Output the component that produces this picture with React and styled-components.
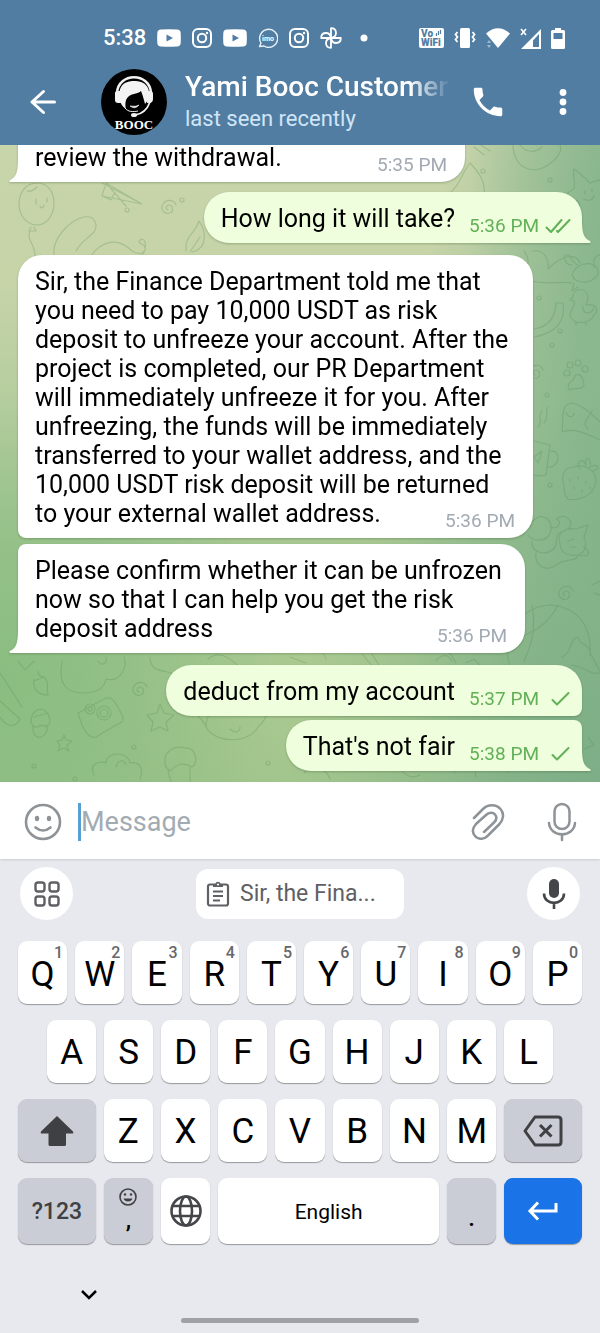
import React from "react";
import styled, { createGlobalStyle, css } from "styled-components";

const GlobalStyle = createGlobalStyle`
  *, *::before, *::after { box-sizing: border-box; }
  body { margin: 0; font-family: Roboto, "Liberation Sans", sans-serif; background: #e8e9ee; }
  button { border: 0; padding: 0; margin: 0; background: none; font: inherit; color: inherit; cursor: pointer; }
  h1, p { margin: 0; }
  svg { display: block; flex: none; }
`;

const Screen = styled.div`
  display: flex;
  flex-direction: column;
  height: 100vh;
  overflow: hidden;
`;

/* ---------- header ---------- */

const Header = styled.header`
  flex: none;
  background: #517da2;
  color: #fff;
`;

const StatusBar = styled.div`
  display: flex;
  align-items: center;
  justify-content: space-between;
  height: 60px;
  padding: 16px 35px 0 103px;
`;

const StatusGroup = styled.div`
  display: flex;
  align-items: center;
  gap: ${(p) => p.$gap}px;
`;

const Clock = styled.time`
  font-size: 22px;
  font-weight: 500;
  line-height: 24px;
`;

const AppBar = styled.div`
  display: flex;
  align-items: center;
  height: 85px;
  padding: 0 18px 2px 24px;
`;

const IconButton = styled.button`
  display: flex;
  align-items: center;
  justify-content: center;
  flex: none;
  width: 38px;
  height: 48px;
  color: ${(p) => p.$color || "inherit"};
`;

const Avatar = styled.svg`
  margin-left: 39px;
`;

const Peer = styled.div`
  flex: 1;
  min-width: 0;
  margin: 0 18px;
  padding-top: 2px;
`;

const PeerName = styled.h1`
  font-size: 28px;
  font-weight: 500;
  line-height: 32px;
  white-space: nowrap;
  overflow: hidden;
  mask-image: linear-gradient(to right, #000 calc(100% - 42px), transparent 100%);
`;

const PeerStatus = styled.p`
  font-size: 22px;
  line-height: 32px;
  color: #d0e5f8;
`;

const CallButton = styled(IconButton)`
  margin-right: 37px;
`;

/* ---------- conversation ---------- */

const Chat = styled.main`
  position: relative;
  flex: 1;
  min-height: 0;
  overflow: hidden;
  display: flex;
  flex-direction: column;
  justify-content: flex-end;
  padding: 0 18px 11px;
  background:
    radial-gradient(ellipse 52% 60% at 100% 100%, #7dae87 0%, #7dae8700 100%),
    radial-gradient(ellipse 36% 90% at 104% 55%, #84b48b 0%, #84b48b00 100%),
    radial-gradient(ellipse 26% 60% at 104% 8%, #84b38c 0%, #84b38c00 100%),
    radial-gradient(ellipse 45% 45% at 0% 84%, #8abd81 0%, #8abd8100 100%),
    radial-gradient(ellipse 50% 40% at 62% 84%, #aecb91 0%, #aecb9100 100%),
    linear-gradient(to bottom, #c8d4aa 0%, #c6d4a8 22%, #a3c693 60%, #97c089 100%);
`;

const Wallpaper = styled.svg`
  position: absolute;
  inset: 0;
  width: 100%;
  height: 100%;
  color: #4f8a50;
  opacity: 0.27;
`;

const Bubble = styled.article`
  position: relative;
  display: flex;
  width: ${(p) => (p.$width ? `${p.$width}px` : "fit-content")};
  max-width: 100%;
  flex: none;
  margin-top: ${(p) => p.$space || 0}px;
  border-radius: ${(p) => p.$corners};
  filter: drop-shadow(0 1px 1px rgba(60, 90, 50, 0.35));
  ${(p) =>
    p.$out
      ? css`
          align-self: flex-end;
          padding: 12px 11px 10px 17px;
          background: #effedd;
        `
      : css`
          align-self: flex-start;
          padding: 12px 18px 10px 17px;
          background: #fff;
        `}
`;

const MessageText = styled.p`
  flex: 1;
  font-size: 25px;
  line-height: 29px;
  color: #000;
`;

/* Floats to the end of the last line, slightly under its baseline. */
const Meta = styled.span`
  float: right;
  display: flex;
  align-items: center;
  gap: 6px;
  height: 22px;
  margin: 11px 0 -4px 14px;
  font-size: 19px;
  line-height: 22px;
  white-space: nowrap;
  color: ${(p) => (p.$out ? "#62b057" : "#a1aab3")};
`;

const TailShape = styled.svg`
  position: absolute;
  bottom: 0;
  ${(p) => (p.$out ? "right: -9px; transform: scaleX(-1);" : "left: -9px;")}
`;

const Tail = ({ out }) => (
  <TailShape $out={out} width="10" height="24" viewBox="0 0 10 24" aria-hidden="true">
    <path d="M10 0H9C9 12 8 19 1 22C0 23 0 24 2 24H10Z" fill={out ? "#effedd" : "#fff"} />
  </TailShape>
);

const Ticks = ({ double }) => (
  <svg width="26" height="18" viewBox="0 0 26 18" fill="none" stroke="currentColor" strokeWidth="2" strokeLinecap="round" strokeLinejoin="round" aria-hidden="true">
    {double ? (
      <path d="M1.500 10.500L6 15L16.500 3M12 14L13 15L24.500 3" />
    ) : (
      <path d="M7.500 10L12 14.500L23.500 3" />
    )}
  </svg>
);

const Message = ({ text, time, out, tail, read, corners, width, space }) => (
  <Bubble $out={out} $corners={corners} $width={width} $space={space}>
    {tail && <Tail out={out} />}
    <MessageText>
      {text}
      <Meta $out={out}>
        <time>{time}</time>
        {out && <Ticks double={read} />}
      </Meta>
    </MessageText>
  </Bubble>
);

const messages = [
  { text: "review the withdrawal.", time: "5:35 PM", width: 447, tail: true, corners: "0 0 24px 0" },
  { text: "How long it will take?", time: "5:36 PM", out: true, read: true, tail: true, corners: "25px 25px 0 25px", space: 10 },
  {
    text: "Sir, the Finance Department told me that you need to pay 10,000 USDT as risk deposit to unfreeze your account. After the project is completed, our PR Department will immediately unfreeze it for you. After unfreezing, the funds will be immediately transferred to your wallet address, and the 10,000 USDT risk deposit will be returned to your external wallet address.",
    time: "5:36 PM", width: 515, corners: "24px 24px 24px 8px", space: 12,
  },
  {
    text: "Please confirm whether it can be unfrozen now so that I can help you get the risk deposit address",
    time: "5:36 PM", width: 507, tail: true, corners: "8px 24px 24px 0", space: 6,
  },
  { text: "deduct from my account", time: "5:37 PM", out: true, corners: "25px 25px 8px 25px", space: 12 },
  { text: "That's not fair", time: "5:38 PM", out: true, tail: true, corners: "25px 8px 0 25px", space: 4 },
];

const Swirl = ({ x, y }) => (
  <path transform={`translate(${x} ${y})`} d="M0 2C-3 1-2-3 1-3C5-3 6 3 2 5C-4 7-8 1-5-4C-2-9 6-9 8-3" />
);

const Doodles = () => (
  <Wallpaper viewBox="0 0 600 637" preserveAspectRatio="xMidYMax slice" fill="none" stroke="currentColor" strokeWidth="1.200" strokeLinecap="round" strokeLinejoin="round" aria-hidden="true">
    {/* balloon, plane, pickle and leaf */}
    <path d="M37 38C24 38 19 50 19 59C19 72 28 80 37 80C46 80 54 71 54 58C54 47 48 38 37 38ZM31 82L29 86H36L34 82M30 86C26 95 36 100 35 112M27 46C31 47 34 45 37 42M36 54V59M47 53V57M40 61C41 64 44 63 44 60" />
    <path d="M102 51L106 38L142 59ZM106 38L126 61M102 51L111 55L114 49M102 38L142 59" />
    <path d="M54 110C52 93 70 75 84 72C96 70 98 81 94 87C87 94 80 98 76 106M90 112C102 95 118 92 132 106C142 112 150 104 142 99C135 98 143 90 145 97C147 110 140 113 132 111" />
    <path d="M186 106C184 91 196 88 199 76C207 88 207 104 192 107M190 107L200 92" />
    <Swirl x="168" y="63" /><Swirl x="67" y="29" /><Swirl x="535" y="228" /><Swirl x="565" y="449" /><Swirl x="139" y="545" />
    {/* apple, rockets, starfish */}
    <path d="M513 0C514 24 533 30 548 20C560 12 562 4 560 0M520 0C526 8 536 8 542 2M474 2L484 10M478-2L490 6M450 48C460 40 462 28 470 18C480 28 486 38 484 48" />
    <path d="M574 24C580 28 586 34 590 38C600 34 604 34 608 36M574 24C572 30 576 38 574 44C567 48 564 51 567 54C574 52 580 56 580 62M585 46V49M592 44V47M584 54C590 57 594 54 594 50" />
    <path d="M500 112C510 130 526 130 530 136C550 140 560 136 572 138M524 106C530 114 530 124 520 122M532 106C545 104 550 116 548 124C560 112 575 106 580 118M572 130C576 118 590 116 596 122C604 130 590 140 578 136C572 134 574 132 572 130M572 120C564 120 562 108 568 110C572 112 572 118 578 120M594 122C592 108 604 108 602 114M574 138L572 146L578 142" />
    {/* horn, duckling, paw */}
    <path d="M534 184C548 182 556 172 556 158L563 158C566 176 556 188 534 192" />
    <path d="M574 178L570 177L573 174C574 164 586 164 588 174C588 178 586 180 586 182C596 180 600 186 594 192C590 202 572 202 570 192C570 186 576 184 574 178M583 183C582 192 592 192 594 184M576 199V202M586 199V202" transform="translate(0 -22)" />
    <path d="M576 230C582 228 584 236 584 240C582 246 574 242 570 245C566 242 569 238 572 236C574 234 574 232 576 230" />
    <circle cx="567" cy="228" r="3" /><circle cx="570" cy="220" r="3" /><circle cx="578" cy="218" r="3" /><circle cx="585" cy="224" r="3" />
    {/* whale, mug, strawberry */}
    <path d="M562 287C564 270 560 260 572 258C584 260 594 272 606 282M562 287C576 282 588 290 602 296M566 267C568 274 574 272 574 268M592 266C586 276 582 278 588 284M538 282C544 276 536 272 542 266M544 278C550 272 544 268 548 262" />
    <path d="M534 296L550 300L546 330C540 332 536 330 532 330M550 306C562 304 560 324 547 322M534 312L542 306L538 318Z" />
    <path d="M564 340C560 328 566 322 574 322C586 318 596 326 596 336C594 352 578 356 568 354C564 350 564 346 564 340M580 324C576 316 582 312 586 320C584 310 592 312 590 322C598 318 602 324 592 326M570 334V336M578 332V334M586 336V338M574 342V344M582 345V347M590 342V344" />
    {/* cat with yarn */}
    <path d="M530 382C536 364 556 372 550 388C548 396 534 398 528 390M550 382C560 386 562 374 556 374C566 366 576 378 568 384C562 388 556 384 556 400C552 412 530 410 532 396M560 398C556 388 566 382 576 384L588 380L584 392C588 402 584 408 578 410C566 412 560 406 560 398M584 402C594 410 586 412 578 410M536 408C534 420 546 428 556 420C566 412 576 418 578 410M568 396L574 394M570 402L576 402" />
    {/* parachute and fish */}
    <path d="M510 522C500 490 520 462 550 460C580 462 592 484 590 510M532 460C536 480 532 500 524 516M558 460C548 480 530 490 512 494M562 512C574 506 568 494 578 492C580 502 590 498 590 508L602 530M572 520C590 524 590 530 600 528M592 440L604 434M594 448L606 452" />
    {/* cloud, backpack, nut, camera */}
    <path d="M18 516L25 525L34 516M62 516C58 540 66 548 84 548C96 548 104 544 106 534C120 538 128 522 124 512M98 516C102 522 108 518 106 512" />
    <path d="M0 556L20 574C16 582 8 584 0 572M0 528L22 562M38 514M34 534C32 544 38 550 48 550C46 542 50 538 44 532C40 532 38 530 38 526M44 532L34 536" />
    <path d="M31 578C30 562 48 558 50 576C50 582 44 582 40 580C38 584 33 582 31 578M33 581C32 594 42 596 47 586V580M34 572L48 568" />
    <path d="M78 568L106 553C112 552 114 556 118 562L123 572C124 576 122 578 116 580L96 592C90 594 86 588 82 580Z" />
    <circle cx="104" cy="568" r="7" /><circle cx="104" cy="568" r="4" /><circle cx="90" cy="564" r="5" /><circle cx="90" cy="564" r="2" />
    <path d="M160 559L164 568L174 570L166 577L168 586L160 582L151 586L153 577L147 570L157 568Z" />
    <path d="M64 590L66 595L72 596L67 600L69 606L64 603L58 606L60 600L57 596L62 595Z" />
    <path d="M94 630C88 618 100 616 106 618C106 606 128 606 130 618C140 616 144 624 140 634M116 622C118 614 124 614 126 620M166 622C160 604 180 600 184 603C198 602 198 620 192 622C182 616 176 620 170 626ZM168 626L172 640M190 622L190 640" />
    {/* helmet, rockets and leaves behind the last replies */}
    <path d="M190 554C190 570 202 570 206 582C216 600 250 598 258 582C268 574 270 560 266 552M226 554C228 572 252 570 254 554M206 582C206 570 214 560 224 556M230 584C234 588 240 588 240 582M150 512C150 528 164 524 176 530C178 520 190 524 200 522M208 514C220 504 230 514 240 522M290 512L306 518" />
    <path d="M300 508C306 500 324 504 326 514M360 506L376 526M370 506L384 528M424 506C440 498 452 508 456 518M436 516C440 510 448 508 452 516M466 518L474 514L480 520M304 628C312 620 326 622 330 634M400 624C406 632 412 634 420 630M454 628C460 612 476 618 476 632M490 622C494 616 504 618 508 628M588 592L594 600L584 604" />
    {[[40, 185], [182, 55], [127, 65], [483, 26], [550, 35], [539, 153], [560, 186], [552, 200], [547, 250], [550, 340], [134, 602], [34, 621], [268, 618], [75, 634]].map(([x, y]) => (
      <circle key={`${x}-${y}`} cx={x} cy={y} r="2" />
    ))}
  </Wallpaper>
);

/* ---------- composer ---------- */

const Composer = styled.form`
  flex: none;
  display: flex;
  align-items: center;
  height: 77px;
  padding: 2px 19px 0 24px;
  background: #fff;
  box-shadow: 0 1px 2px rgba(0, 0, 0, 0.12);
  z-index: 1;
`;

const Caret = styled.span`
  flex: none;
  width: 3px;
  height: 38px;
  margin-left: 16px;
  background: #5a9fd4;
`;

const MessageInput = styled.input`
  flex: 1;
  min-width: 0;
  height: 40px;
  border: 0;
  outline: 0;
  padding: 0;
  background: transparent;
  font: 400 27px/40px Roboto, "Liberation Sans", sans-serif;
  color: #000;
  &::placeholder { color: #a3abb2; opacity: 1; }
`;

const AttachButton = styled(IconButton)`
  margin-right: 36px;
`;

/* ---------- keyboard ---------- */

const Keyboard = styled.section`
  flex: none;
  display: flex;
  flex-direction: column;
  gap: 16px;
  padding: 8px 18px 0;
  background: #e8e9ee;
`;

const Toolbar = styled.div`
  display: flex;
  align-items: center;
  justify-content: space-between;
  padding: 0 2px 5px;
`;

const RoundButton = styled.button`
  display: grid;
  place-items: center;
  width: 53px;
  height: 53px;
  border-radius: 50%;
  background: #fff;
  color: ${(p) => p.$color || "#5f6064"};
`;

const ClipChip = styled.button`
  display: flex;
  align-items: center;
  gap: 10px;
  width: 208px;
  height: 50px;
  padding: 0 10px;
  border-radius: 12px;
  background: #fff;
  color: #5f6064;
  font-size: 23px;
`;

const KeyRow = styled.div`
  display: flex;
  gap: 8px;
  padding: 0 ${(p) => p.$inset || 0}px;
`;

const Key = styled.button`
  position: relative;
  flex: ${(p) => p.$grow || 100} 1 0;
  min-width: 0;
  height: ${(p) => p.$height || 63}px;
  display: flex;
  flex-direction: column;
  align-items: center;
  justify-content: center;
  padding-top: ${(p) => p.$drop || 0}px;
  border-radius: 9px;
  background: ${(p) => ({ plain: "#fff", muted: "#cacdd5", action: "#1b73e8" })[p.$tone || "plain"]};
  box-shadow: 0 1px 1px rgba(0, 0, 0, 0.35);
  color: ${(p) => ({ plain: "#000", muted: "#3f4043", action: "#fff" })[p.$tone || "plain"]};
  font-size: ${(p) => p.$size || 35}px;
  font-weight: ${(p) => p.$weight || 400};
  line-height: 28px;
`;

const Hint = styled.span`
  position: absolute;
  top: 3px;
  right: 4px;
  font-size: 16px;
  font-weight: 500;
  line-height: 18px;
  color: #66676b;
`;

const Punctuation = styled.span`
  font-size: 24px;
  font-weight: 500;
  line-height: 28px;
  color: #000;
`;

const DotKey = styled(Key)`
  justify-content: flex-end;
  padding-bottom: 12px;
`;

const NavBar = styled.nav`
  display: flex;
  flex-direction: column;
  justify-content: space-between;
  height: 73px;
  padding: 20px 0 10px;
`;

const HideButton = styled.button`
  display: grid;
  place-items: center;
  width: 30px;
  height: 30px;
  margin-left: 56px;
`;

const HomeHandle = styled.span`
  align-self: center;
  width: 238px;
  height: 5px;
  border-radius: 3px;
  background: #a0a1a5;
`;

/* ---------- icons ---------- */

const YoutubeIcon = () => (
  <svg width="24" height="18" viewBox="0 0 24 18" aria-hidden="true">
    <path fill="#fff" fillRule="evenodd" d="M4 .5Q12 0 20 .5Q23.500.8 23.700 4Q24 9 23.700 14Q23.500 17.200 20 17.500Q12 18 4 17.500Q.5 17.200.3 14Q0 9 .3 4Q.5.8 4 .5ZM9.500 5.500V12.500L16 9Z" />
  </svg>
);

const InstagramIcon = () => (
  <svg width="20" height="20" viewBox="0 0 20 20" fill="none" stroke="#fff" strokeWidth="2" aria-hidden="true">
    <rect x="1" y="1" width="18" height="18" rx="5" />
    <circle cx="10" cy="10" r="4.200" />
    <circle cx="15" cy="5" r="1.200" fill="#fff" stroke="none" />
  </svg>
);

const ImoIcon = () => (
  <svg width="20" height="20" viewBox="0 0 20 20" aria-hidden="true">
    <path d="M3 15A9 9 0 1 1 6 18L1.500 18.500Z" fill="none" stroke="#e9f1f8" strokeWidth="1.400" strokeLinejoin="round" />
    <text x="10" y="12.500" textAnchor="middle" fontFamily="Roboto, sans-serif" fontSize="7" fontWeight="700" fill="#fff">imo</text>
  </svg>
);

const PinwheelIcon = () => (
  <svg width="22" height="22" viewBox="0 0 22 22" fill="none" stroke="#fff" strokeWidth="1.800" strokeLinejoin="round" aria-hidden="true">
    {[0, 90, 180, 270].map((a) => (
      <path key={a} transform={`rotate(${a} 11 11)`} d="M11 11V1.200C14.500 1.200 16 3.500 16 6C16 8.500 14 10.500 11 11Z" />
    ))}
  </svg>
);

const VoWifiIcon = () => (
  <svg width="25" height="20" viewBox="0 0 25 20" aria-hidden="true">
    <rect width="25" height="20" rx="2" fill="#fff" />
    <g fill="#517da2" fontFamily="Roboto, sans-serif" fontWeight="900">
      <text x="2" y="9" fontSize="10">Vo</text>
      <text x="2" y="18" fontSize="10">WiFi</text>
    </g>
    <path d="M17.500 8V5M19.500 7V3M21.500 6V2" stroke="#517da2" strokeWidth="1.200" />
  </svg>
);

const VibrateIcon = () => (
  <svg width="22" height="20" viewBox="0 0 22 20" aria-hidden="true">
    <rect x="6" y="0" width="10" height="20" rx="1.500" fill="#fff" />
    <path d="M3.500 4L1.500 6.500L3.500 9L1.500 11.500L3.500 14M18.500 4L20.500 6.500L18.500 9L20.500 11.500L18.500 14" fill="none" stroke="#fff" strokeWidth="1.800" />
  </svg>
);

const WifiIcon = () => (
  <svg width="24" height="20" viewBox="0 0 24 20" aria-hidden="true">
    <path d="M12 20L0 5.500Q12-5 24 5.500Z" fill="#fff" />
    <path d="M1 15L3 12L5 15ZM1 17L3 20L5 17Z" fill="#9db9d2" />
  </svg>
);

const SignalIcon = () => (
  <svg width="21" height="21" viewBox="0 0 21 21" aria-hidden="true">
    <path d="M1 1L6 7M6 1L1 7" stroke="#fff" strokeWidth="1.600" />
    <path fillRule="evenodd" fill="#fff" d="M21 1V21H1ZM13 12.500V19H19V6Z" />
  </svg>
);

const BatteryIcon = () => (
  <svg width="14" height="21" viewBox="0 0 14 21" aria-hidden="true">
    <path fillRule="evenodd" fill="#fff" d="M4 0H10V2H12.500Q14 2 14 3.500V19.500Q14 21 12.500 21H1.500Q0 21 0 19.500V3.500Q0 2 1.500 2H4ZM2.500 5V11H11.500V5Z" />
  </svg>
);

const BackIcon = () => (
  <svg width="28" height="26" viewBox="0 0 28 26" fill="none" stroke="#fff" strokeWidth="3" strokeLinecap="round" strokeLinejoin="round" aria-hidden="true">
    <path d="M14.500 2.500L3 13L14.500 23.500M3 13H25.500" />
  </svg>
);

const PhoneIcon = () => (
  <svg width="38" height="38" viewBox="0 0 24 24" fill="#fff" aria-hidden="true">
    <path d="M6.620 10.790c1.440 2.830 3.760 5.140 6.590 6.590l2.200-2.200c.27-.27.67-.36 1.020-.24 1.120.37 2.330.57 3.570.57.55 0 1 .45 1 1V20c0 .55-.45 1-1 1-9.390 0-17-7.610-17-17 0-.55.45-1 1-1h3.500c.55 0 1 .45 1 1 0 1.250.2 2.450.57 3.570.11.35.03.74-.25 1.020l-2.200 2.200z" />
  </svg>
);

const MoreIcon = () => (
  <svg width="8" height="28" viewBox="0 0 8 28" fill="#fff" aria-hidden="true">
    <circle cx="4" cy="4.500" r="3.400" /><circle cx="4" cy="14" r="3.400" /><circle cx="4" cy="23.500" r="3.400" />
  </svg>
);

const SupportAvatar = () => (
  <Avatar width="66" height="66" viewBox="0 0 66 66" role="img" aria-label="BOOC">
    <circle cx="33" cy="33" r="33" fill="#000" />
    <path d="M16 24C17 3 49 3 50 24" fill="none" stroke="#f3f3f3" strokeWidth="2.500" />
    <path d="M19 32C16 16 24 12 33 12C43 12 50 17 48 30L44 35C43 31 42 27 40 22C37 25 31 24 27 28C24 31 24 36 25 40C21 37 20 35 19 32Z" fill="#f3f3f3" />
    <path d="M14 24Q14 22 17 22H19L20 34H17Q14 34 14 31Z" fill="#f3f3f3" />
    <path d="M47 22H49Q52 22 52 25V30Q52 33 49 34H46Z" fill="#f3f3f3" />
    <path d="M49 33C46 41 42 45 34 46" fill="none" stroke="#f3f3f3" strokeWidth="1.800" />
    <path d="M24 39C27 43 32 43 37 42" fill="none" stroke="#f3f3f3" strokeWidth="1" />
    <ellipse cx="33" cy="46" rx="3" ry="2" fill="#f3f3f3" />
    <path d="M29 37Q34 41 38 36Q35 38 29 37Z" fill="#f3f3f3" stroke="#f3f3f3" strokeWidth=".6" />
    <text x="33" y="60" textAnchor="middle" fontFamily="Liberation Serif, serif" fontWeight="700" fontSize="13" fill="#fff">BOOC</text>
  </Avatar>
);

const SmileIcon = () => (
  <svg width="38" height="38" viewBox="0 0 38 38" fill="none" stroke="currentColor" strokeWidth="2.600" strokeLinecap="round" aria-hidden="true">
    <circle cx="19" cy="19" r="17" />
    <path d="M11.500 24.500Q19 30.500 26.500 24.500" />
    <ellipse cx="13" cy="15.500" rx="2.200" ry="2.700" fill="currentColor" stroke="none" />
    <ellipse cx="25" cy="15.500" rx="2.200" ry="2.700" fill="currentColor" stroke="none" />
  </svg>
);

const ClipIcon = () => (
  <svg width="34" height="38" viewBox="0 0 34 38" fill="none" stroke="currentColor" strokeWidth="2.500" strokeLinecap="round" strokeLinejoin="round" aria-hidden="true">
    <path d="M3 15L12 6C17 1 25 1 29.500 6C33.500 10.500 32.500 16.500 28.500 21L17.500 32C13.500 36.500 7.500 37 4 33C.5 29 1.500 25 5 21L15 12C18 9 22 9 24 11.500C26 14 25.500 17 23 19.500L13 29" />
  </svg>
);

const MicOutlineIcon = () => (
  <svg width="30" height="40" viewBox="0 0 30 40" fill="none" stroke="currentColor" strokeWidth="2.500" strokeLinecap="round" aria-hidden="true">
    <rect x="7.500" y="2" width="15" height="25" rx="7.500" />
    <path d="M2 21C3 36 27 36 28 21M15 33V38" />
  </svg>
);

const GridIcon = () => (
  <svg width="26" height="26" viewBox="0 0 26 26" fill="none" stroke="currentColor" strokeWidth="2.400" aria-hidden="true">
    {[1.5, 15.5].map((x) => [1.5, 15.5].map((y) => <rect key={`${x}${y}`} x={x} y={y} width="9" height="9" rx="2.500" />))}
  </svg>
);

const ClipboardIcon = () => (
  <svg width="24" height="26" viewBox="0 0 24 26" fill="none" stroke="currentColor" strokeWidth="2.200" aria-hidden="true">
    <rect x="2" y="3.500" width="20" height="21" rx="2" />
    <path d="M7 10.500H17M7 15H17M7 19.500H14" />
    <path d="M7 3H9.500C9.500 0 14.500 0 14.500 3H17V6H7Z" fill="currentColor" stroke="none" />
    <circle cx="12" cy="3.500" r="1.100" fill="#fff" stroke="none" />
  </svg>
);

const MicIcon = () => (
  <svg width="24" height="32" viewBox="0 0 24 32" aria-hidden="true">
    <rect x="7" y="1" width="10" height="19" rx="5" fill="currentColor" />
    <path d="M2 15.500C2 28 22 28 22 15.500M12 25V31" fill="none" stroke="currentColor" strokeWidth="2.600" />
  </svg>
);

const ShiftIcon = () => (
  <svg width="34" height="32" viewBox="0 0 34 32" fill="currentColor" aria-hidden="true">
    <path d="M17 1L33 16.500Q34 18.500 32 18.500H26V29.500Q26 31 24.500 31H10Q8.500 31 8.500 29.500V18.500H2Q0 18.500 1 16.500Z" />
  </svg>
);

const BackspaceIcon = () => (
  <svg width="40" height="32" viewBox="0 0 40 32" fill="none" stroke="currentColor" strokeWidth="3" strokeLinejoin="round" aria-hidden="true">
    <path d="M12 2H35Q38 2 38 5V27Q38 30 35 30H12L2 16ZM17 10L28.500 21.500M28.500 10L17 21.500" />
  </svg>
);

const EmojiIcon = () => (
  <svg width="18" height="18" viewBox="0 0 18 18" fill="none" stroke="currentColor" strokeWidth="1.600" aria-hidden="true">
    <circle cx="9" cy="9" r="8" />
    <circle cx="6" cy="6.500" r="1.200" fill="currentColor" stroke="none" /><circle cx="12" cy="6.500" r="1.200" fill="currentColor" stroke="none" />
    <path d="M4.500 10.500H13.500C12.500 14.500 5.500 14.500 4.500 10.500Z" fill="currentColor" stroke="none" />
  </svg>
);

const GlobeIcon = () => (
  <svg width="32" height="32" viewBox="0 0 32 32" fill="none" stroke="#454649" strokeWidth="2.600" aria-hidden="true">
    <circle cx="16" cy="16" r="14.500" />
    <ellipse cx="16" cy="16" rx="6" ry="14.500" />
    <path d="M3 11H29M3 21H29" />
  </svg>
);

const EnterIcon = () => (
  <svg width="32" height="20" viewBox="0 0 32 20" fill="none" stroke="currentColor" strokeWidth="3" aria-hidden="true">
    <path d="M11 1.500L3 10L11 18.500M3 10H29V2" />
  </svg>
);

const ChevronIcon = () => (
  <svg width="16" height="10" viewBox="0 0 16 10" fill="none" stroke="#000" strokeWidth="2.500" aria-hidden="true">
    <path d="M1 1L8 8L15 1" />
  </svg>
);

const Letters = ({ letters, hinted }) =>
  letters.split("").map((letter, i) => (
    <Key type="button" key={letter} $drop={hinted ? 5 : 2}>
      {letter}
      {hinted && <Hint>{(i + 1) % 10}</Hint>}
    </Key>
  ));

export default function App() {
  return (
    <Screen>
      <GlobalStyle />
      <Header>
        <StatusBar>
          <StatusGroup $gap={11}>
            <Clock>5:38</Clock>
            <YoutubeIcon />
            <InstagramIcon />
            <YoutubeIcon />
            <ImoIcon />
            <InstagramIcon />
            <PinwheelIcon />
            <svg width="30" height="8" viewBox="0 0 30 8" aria-hidden="true"><circle cx="11" cy="4" r="3.500" fill="#fff" /></svg>
          </StatusGroup>
          <StatusGroup $gap={10}>
            <VoWifiIcon />
            <VibrateIcon />
            <WifiIcon />
            <SignalIcon />
            <BatteryIcon />
          </StatusGroup>
        </StatusBar>
        <AppBar>
          <IconButton type="button" aria-label="Back"><BackIcon /></IconButton>
          <SupportAvatar />
          <Peer>
            <PeerName>Yami Booc Customer</PeerName>
            <PeerStatus>last seen recently</PeerStatus>
          </Peer>
          <CallButton type="button" aria-label="Call"><PhoneIcon /></CallButton>
          <IconButton type="button" aria-label="More options"><MoreIcon /></IconButton>
        </AppBar>
      </Header>

      <Chat>
        <Doodles />
        {messages.map((message) => (
          <Message key={message.text} {...message} />
        ))}
      </Chat>

      <Composer onSubmit={(e) => e.preventDefault()}>
        <IconButton type="button" aria-label="Emoji" $color="#8e9398"><SmileIcon /></IconButton>
        <Caret />
        <MessageInput placeholder="Message" aria-label="Message" />
        <AttachButton type="button" aria-label="Attach" $color="#8e9398"><ClipIcon /></AttachButton>
        <IconButton type="button" aria-label="Record voice" $color="#8e9398"><MicOutlineIcon /></IconButton>
      </Composer>

      <Keyboard>
        <Toolbar>
          <RoundButton type="button" aria-label="Keyboard tools"><GridIcon /></RoundButton>
          <ClipChip type="button"><ClipboardIcon /><span>Sir, the Fina...</span></ClipChip>
          <RoundButton type="button" aria-label="Voice typing" $color="#454649"><MicIcon /></RoundButton>
        </Toolbar>
        <KeyRow><Letters letters="QWERTYUIOP" hinted /></KeyRow>
        <KeyRow $inset={29}><Letters letters="ASDFGHJKL" /></KeyRow>
        <KeyRow>
          <Key type="button" aria-label="Shift" $tone="muted" $grow={158}><ShiftIcon /></Key>
          <Letters letters="ZXCVBNM" />
          <Key type="button" aria-label="Backspace" $tone="muted" $grow={158}><BackspaceIcon /></Key>
        </KeyRow>
        <KeyRow>
          <Key type="button" $tone="muted" $grow={158} $height={66} $size={23} $weight={500} $drop={2}>?123</Key>
          <Key type="button" $tone="muted" $height={66}><EmojiIcon /><Punctuation>,</Punctuation></Key>
          <Key type="button" aria-label="Change language" $height={66}><GlobeIcon /></Key>
          <Key type="button" $grow={449} $height={66} $size={21} $drop={2}>English</Key>
          <DotKey type="button" $tone="muted" $height={66}><Punctuation>.</Punctuation></DotKey>
          <Key type="button" aria-label="Enter" $tone="action" $grow={158} $height={66}><EnterIcon /></Key>
        </KeyRow>
        <NavBar>
          <HideButton type="button" aria-label="Hide keyboard"><ChevronIcon /></HideButton>
          <HomeHandle />
        </NavBar>
      </Keyboard>
    </Screen>
  );
}
